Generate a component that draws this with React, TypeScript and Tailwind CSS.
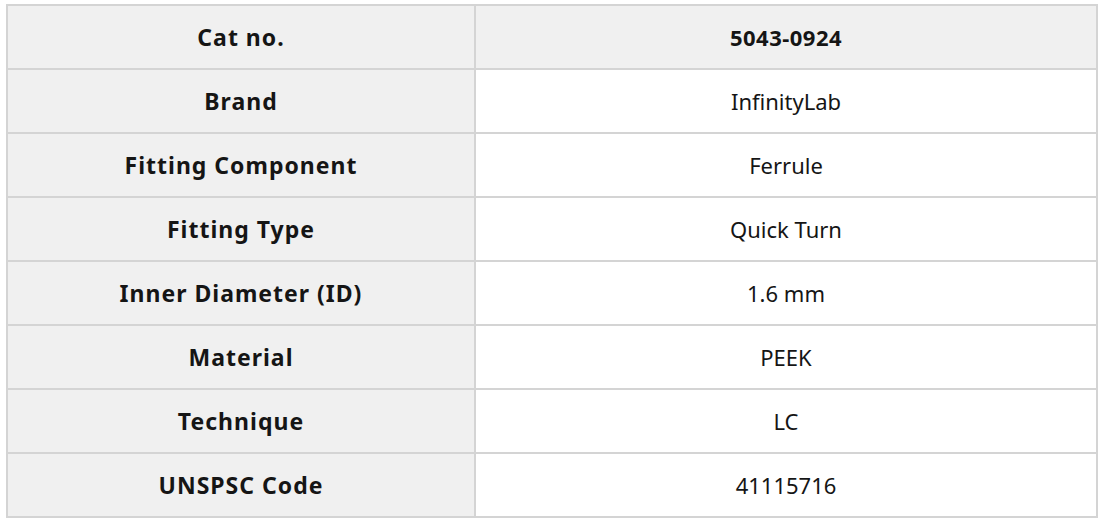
const rows: [string, string][] = [
  ['Brand', 'InfinityLab'],
  ['Fitting Component', 'Ferrule'],
  ['Fitting Type', 'Quick Turn'],
  ['Inner Diameter (ID)', '1.6 mm'],
  ['Material', 'PEEK'],
  ['Technique', 'LC'],
  ['UNSPSC Code', '41115716'],
];

export default function App() {
  return (
    <div
      className="bg-white w-[1104px] h-[528px] pt-[4px] pl-[6px]"
      style={{ fontFamily: '"Noto Sans", "Noto Sans CJK KR", sans-serif' }}
    >
      <table className="w-[1092px] border-collapse text-[22px] text-[#151515]">
        <thead>
          <tr className="h-[64px] bg-[#f0f0f0]">
            <th className="w-[468px] border-2 border-[#d4d4d4] text-center text-[23px] font-bold tracking-[1px]">Cat no.</th>
            <th className="border-2 border-[#d4d4d4] text-center font-bold tracking-[0.5px]">5043-0924</th>
          </tr>
        </thead>
        <tbody>
          {rows.map(([label, value]) => (
            <tr key={label} className="h-[64px]">
              <td className="border-2 border-[#d4d4d4] bg-[#f0f0f0] text-center text-[23px] font-bold tracking-[1px]">{label}</td>
              <td className="border-2 border-[#d4d4d4] bg-white text-center">{value}</td>
            </tr>
          ))}
        </tbody>
      </table>
    </div>
  );
}
